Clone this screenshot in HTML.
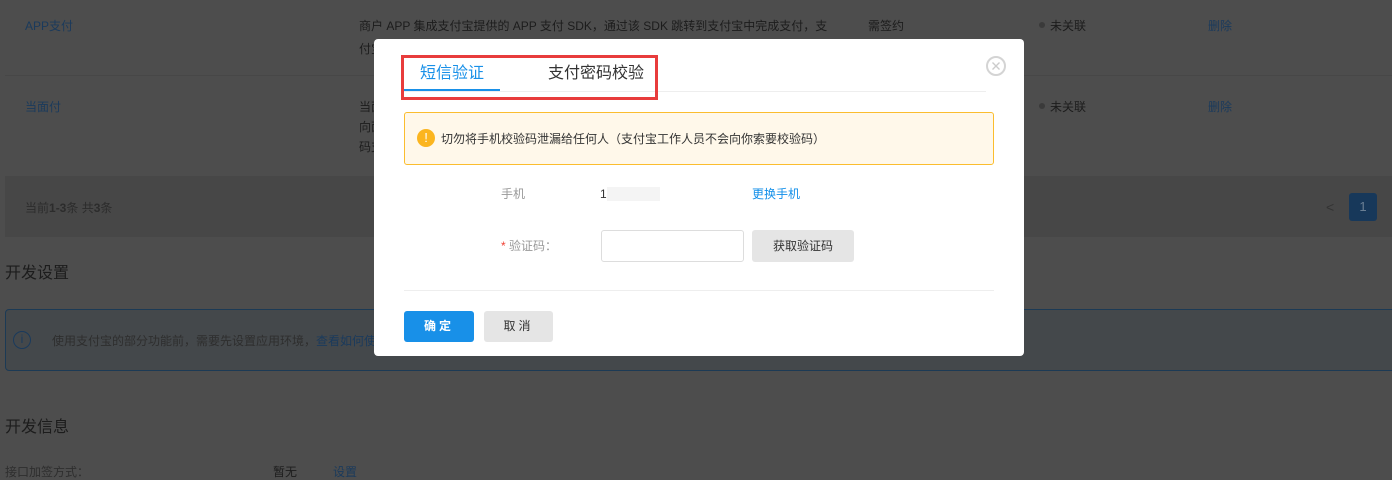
<!DOCTYPE html>
<html style="background:#4d4d4d"><head><meta charset="utf-8"><style>
*{margin:0;padding:0;box-sizing:border-box}
html,body{background:#4d4d4d}
body{width:1392px;height:476px;overflow:hidden;position:relative;font-family:"Liberation Sans","Noto Sans CJK SC",sans-serif;font-size:12px;color:#1c1c1c}
.bg{position:absolute;left:0;top:0;width:1392px;height:476px;background:#4d4d4d}
.a{position:absolute;white-space:nowrap;line-height:16px}
.bl{color:#1a3a5c}
.m{position:absolute;left:374px;top:39px;width:650px;height:317px;background:#fff;border-radius:4px;color:#333}
.m .bl{color:#108ee9}
</style></head><body>
<div class="bg"></div>
<div class="a bl" style="left:25px;top:18px">APP支付</div>
<div class="a" style="left:359px;top:18px">商户 APP 集成支付宝提供的 APP 支付 SDK，通过该 SDK 跳转到支付宝中完成支付，支</div>
<div class="a" style="left:359px;top:41px">付宝</div>
<div class="a" style="left:868px;top:18px">需签约</div>
<div style="position:absolute;left:1039px;top:22px;width:6px;height:6px;border-radius:50%;background:#3a3a3a"></div>
<div class="a" style="left:1050px;top:18px">未关联</div>
<div class="a bl" style="left:1208px;top:18px">删除</div>
<div style="position:absolute;left:5px;top:75px;width:1387px;height:1px;background:#474747"></div>
<div class="a bl" style="left:25px;top:99px">当面付</div>
<div class="a" style="left:359px;top:99px">当面</div>
<div class="a" style="left:359px;top:119px">向面</div>
<div class="a" style="left:359px;top:139px">码支</div>
<div style="position:absolute;left:1039px;top:103px;width:6px;height:6px;border-radius:50%;background:#3a3a3a"></div>
<div class="a" style="left:1050px;top:99px">未关联</div>
<div class="a bl" style="left:1208px;top:99px">删除</div>
<div style="position:absolute;left:5px;top:176px;width:1387px;height:61px;background:#474747"></div>
<div class="a" style="left:25px;top:200px;color:#2c2c2c">当前<b>1-3</b>条 共<b>3</b>条</div>
<div class="a" style="left:1326px;top:199px;color:#333;font-size:14px">&lt;</div>
<div style="position:absolute;left:1349px;top:193px;width:28px;height:28px;border-radius:3px;background:#17385a;color:#6a7f94;text-align:center;line-height:28px;font-size:13px">1</div>
<div class="a" style="left:5px;top:264px;font-size:16px;line-height:20px;color:#1c1c1c">开发设置</div>
<div style="position:absolute;left:5px;top:309px;width:1400px;height:62px;background:#44484b;border:1px solid #1c3a55;border-radius:4px"></div>
<div style="position:absolute;left:13px;top:331px;width:18px;height:18px;border:1.5px solid #1a3a5c;border-radius:50%;color:#1a3a5c;text-align:center;font-size:12px;line-height:15px">i</div>
<div class="a" style="left:52px;top:333px;color:#2e2e2e">使用支付宝的部分功能前，需要先设置应用环境，<span class="bl">查看如何使用</span></div>
<div class="a" style="left:5px;top:418px;font-size:16px;line-height:20px;color:#1c1c1c">开发信息</div>
<div class="a" style="left:5px;top:464px;color:#2e2e2e">接口加签方式：</div>
<div class="a" style="left:273px;top:464px;color:#1c1c1c">暂无</div>
<div class="a bl" style="left:333px;top:464px">设置</div>
<div class="m">
<div class="a" style="left:46px;top:25px;font-size:16px;line-height:20px;color:#1890e8">短信验证</div>
<div class="a" style="left:174px;top:25px;font-size:16px;line-height:20px;color:#333">支付密码校验</div>
<div style="position:absolute;left:30px;top:52px;width:582px;height:1px;background:#eee"></div>
<div style="position:absolute;left:30px;top:50px;width:96px;height:2px;background:#1890e8"></div>
<div style="position:absolute;left:27px;top:16px;width:257px;height:45px;border:3px solid #e83c3c"></div>
<div style="position:absolute;left:612px;top:17px;width:20px;height:20px;border:2px solid #d4d4d4;border-radius:50%"></div>
<svg style="position:absolute;left:612px;top:17px" width="20" height="20"><path d="M6.5 6.5L13.5 13.5M13.5 6.5L6.5 13.5" stroke="#ccc" stroke-width="1.4"/></svg>
<div style="position:absolute;left:30px;top:73px;width:590px;height:53px;background:#fff8ea;border:1px solid #fbbd2e;border-radius:3px"></div>
<div style="position:absolute;left:43px;top:90px;width:18px;height:18px;border-radius:50%;background:#fbb51f;color:#fff;text-align:center;font-size:13px;line-height:18px">!</div>
<div class="a" style="left:67px;top:92px;color:#333">切勿将手机校验码泄漏给任何人（支付宝工作人员不会向你索要校验码）</div>
<div class="a" style="left:127px;top:147px;color:#999">手机</div>
<div class="a" style="left:226px;top:147px;color:#333">1<span style="background:#f4f4f4">&nbsp;&nbsp;&nbsp;&nbsp;&nbsp;&nbsp;&nbsp;&nbsp;&nbsp;&nbsp;&nbsp;&nbsp;&nbsp;&nbsp;&nbsp;&nbsp;</span></div>
<div class="a bl" style="left:378px;top:147px">更换手机</div>
<div class="a" style="left:127px;top:199px;color:#999"><span style="color:#f04134">*</span> 验证码：</div>
<div style="position:absolute;left:227px;top:191px;width:143px;height:32px;border:1px solid #ddd;border-radius:3px"></div>
<div style="position:absolute;left:378px;top:191px;width:102px;height:32px;background:#e5e5e5;border-radius:3px;text-align:center;line-height:32px;color:#333">获取验证码</div>
<div style="position:absolute;left:30px;top:251px;width:590px;height:1px;background:#eee"></div>
<div style="position:absolute;left:30px;top:272px;width:70px;height:31px;background:#1890e8;border-radius:3px;text-align:center;line-height:31px;color:#fff;font-weight:bold;letter-spacing:3px">确定</div>
<div style="position:absolute;left:110px;top:272px;width:69px;height:31px;background:#e5e5e5;border-radius:3px;text-align:center;line-height:31px;color:#333;letter-spacing:3px">取消</div>
</div>
</body></html>
